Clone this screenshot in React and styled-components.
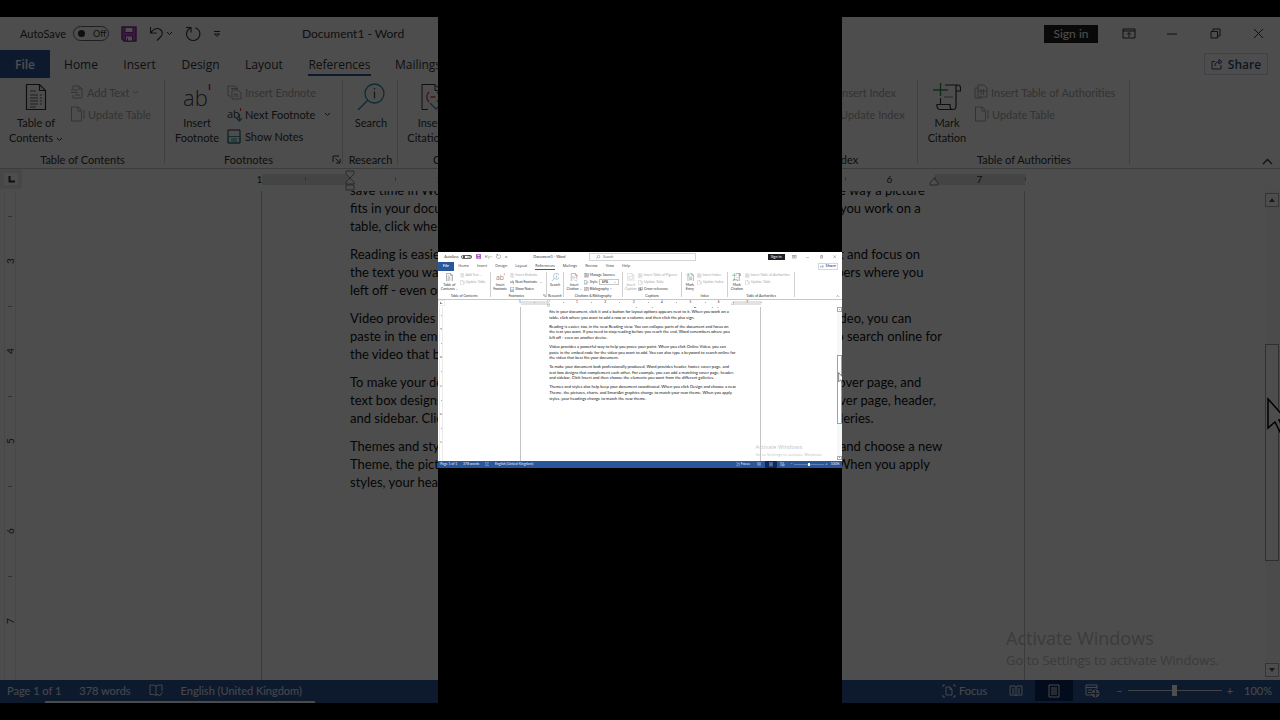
import React from 'react';
import styled, { createGlobalStyle } from 'styled-components';

const GlobalStyle = createGlobalStyle`
  * {
    box-sizing: border-box;
  }

  body {
    margin: 0;
    background: #000;
  }

  button,
  input,
  select {
    margin: 0;
    padding: 0;
    border: 0;
    background: none;
    color: inherit;
    font: inherit;
  }
`;

/* ---------- stage ---------- */

const Stage = styled.main`
  display: grid;
  grid-template-columns: 438fr 404fr 438fr;
  min-height: 100vh;
  overflow: hidden;
  background: #000;
`;

const Backdrop = styled.div`
  grid-area: 1 / 1 / 2 / 4;
  display: flex;
  align-items: center;
  min-width: 0;
  opacity: 0.3;
`;

const Feature = styled.div`
  grid-area: 1 / 2 / 2 / 3;
  display: flex;
  align-items: center;
  min-width: 0;
  background: #000;
  z-index: 1;
`;

const Miniature = styled.div`
  width: 100%;
  zoom: 0.3156;
`;

/* ---------- window ---------- */

const Window = styled.section`
  display: flex;
  flex-direction: column;
  width: 100%;
  min-height: 0;
  aspect-ratio: 1280 / 686;
  overflow: hidden;
  background: #fff;
  color: #333;
  font-family: Lato, 'Open Sans', sans-serif;
  font-size: 11px;
  line-height: 15px;
`;

const TitleBar = styled.header`
  display: grid;
  grid-template-columns: 302px 175px 342px 1fr;
  align-items: center;
  flex: none;
  height: 33px;
`;

const QuickAccess = styled.div`
  display: flex;
  align-items: center;
  gap: 12px;
  padding-left: 20px;
`;

const AutoSave = styled.label`
  display: flex;
  align-items: center;
  gap: 7px;
`;

const Toggle = styled.span`
  display: flex;
  align-items: center;
  gap: 8px;
  width: 36px;
  height: 15px;
  padding-left: 4px;
  border: 1px solid #666;
  border-radius: 8px;
  font-size: 9px;
  line-height: 13px;

  input {
    appearance: none;
    width: 7px;
    height: 7px;
    border-radius: 50%;
    background: #333;
  }
`;

const IconButton = styled.button`
  display: flex;
  align-items: center;
  justify-content: center;
  gap: 2px;
`;

const DocTitle = styled.h1`
  margin: 0;
  font-size: 12px;
  font-weight: 400;
  line-height: 16px;
`;

const SearchBox = styled.label`
  display: flex;
  align-items: center;
  gap: 8px;
  height: 27px;
  padding-left: 22px;
  border: 1px solid #d4d4d4;

  input {
    flex: 1;
    min-width: 0;
    outline: 0;
  }

  input::placeholder {
    color: #666;
    opacity: 1;
  }
`;

const WindowControls = styled.div`
  display: flex;
  align-items: center;
  justify-content: flex-end;
  padding-right: 15px;

  ${IconButton} {
    width: 14px;
    margin-left: 29px;
  }
`;

const SignIn = styled.button`
  width: 54px;
  height: 18px;
  margin-right: -5px;
  background: #1f1f1f;
  color: #fff;
  font-size: 12px;
  line-height: 16px;
`;

const TabBar = styled.nav`
  display: flex;
  flex: none;
  height: 28px;
  padding-right: 12px;
  font-family: 'Open Sans', 'Noto Sans', sans-serif;
  font-size: 12px;
`;

const Tab = styled.button`
  display: flex;
  align-items: center;
  justify-content: center;
  width: ${props => props.$width}px;
  background: ${props => (props.$file ? '#2b579a' : 'none')};
  color: ${props => (props.$file ? '#fff' : '#333')};
  font-weight: ${props => (props.$file ? 600 : 400)};

  span {
    height: 23px;
    padding-top: 4px;
    border-bottom: 2px solid ${props => (props.$active ? '#2b579a' : 'transparent')};
  }
`;

const ShareButton = styled.button`
  display: flex;
  align-items: center;
  justify-content: center;
  align-self: center;
  gap: 5px;
  width: 64px;
  height: 22px;
  margin-left: auto;
  border: 1px solid #d2d6de;
  border-radius: 2px;
  color: #2b4a80;
  font-weight: 600;
`;

/* ---------- ribbon ---------- */

const Ribbon = styled.div`
  display: flex;
  flex: none;
  height: 91px;
  border-bottom: 1px solid #c6c6c6;
`;

const Group = styled.section`
  display: flex;
  flex-direction: column;
  justify-content: space-between;
  flex: none;
  width: ${props => props.$width}px;
  padding-top: 2px;
`;

const GroupBody = styled.div`
  display: flex;
`;

const GroupLabel = styled.footer`
  display: flex;
  align-items: center;
  height: 17px;
  white-space: nowrap;

  span {
    flex: 1;
    text-align: center;
  }

  button {
    margin-right: 2px;
  }
`;

const Divider = styled.hr`
  flex: none;
  width: 1px;
  margin: 2px 0 4px -1px;
  border: 0;
  background: #d0d0d0;
`;

const BigButton = styled.button`
  display: flex;
  flex-direction: column;
  align-items: center;
  gap: 4px;
  flex: none;
  width: ${props => props.$width}px;
  padding: 3px 0 0 2px;
  color: ${props => (props.disabled ? '#a8a8a8' : '#333')};
  white-space: nowrap;
`;

const Commands = styled.div`
  display: flex;
  flex-direction: column;
  align-items: flex-start;
  padding-top: 1px;
`;

const Command = styled.button`
  display: flex;
  align-items: center;
  gap: 3px;
  height: 22px;
  color: ${props => (props.disabled ? '#a8a8a8' : '#333')};
  white-space: nowrap;
`;

const StyleField = styled.label`
  display: flex;
  align-items: center;
  gap: 3px;
  height: 22px;
`;

const SelectBox = styled.span`
  display: flex;
  align-items: center;
  width: 62px;
  height: 18px;
  padding: 0 5px;
  border: 1px solid #c8c8c8;

  select {
    appearance: none;
    flex: 1;
    min-width: 0;
  }
`;

const Collapse = styled.button`
  align-self: flex-end;
  height: 16px;
  margin: 0 7px 0 auto;
`;

/* ---------- rulers and page ---------- */

const RulerRow = styled.div`
  display: flex;
  flex: none;
  height: 22px;
`;

const TabSelector = styled.button`
  display: flex;
  align-items: center;
  justify-content: center;
  width: 22px;
  height: 20px;
  border: 4px solid #ececec;
  background: #fff;
`;

const RulerArea = styled.div`
  display: flex;
  flex: 1;
  justify-content: center;
  padding-right: 16px;
`;

const Ruler = styled.div`
  display: grid;
  grid-template-columns: 88px 584px 91px;
  grid-template-rows: 20px;
`;

const RulerMargin = styled.div`
  grid-row: 1;
  grid-column: ${props => props.$column};
  align-self: center;
  height: 11px;
  background: #e2e2e2;
`;

const RulerMarkers = styled.div`
  grid-area: 1 / 2;
  display: flex;
  align-items: flex-end;
  justify-content: space-between;
  height: 22px;
  margin: 0 -5px;
  z-index: 1;
`;

const RulerNumbers = styled.div`
  grid-area: 1 / 1 / 2 / 4;
  display: flex;
  justify-self: end;
  font-size: 10px;
  line-height: 12px;
`;

const Inch = styled.span`
  display: flex;
  align-items: center;
  justify-content: center;
  width: 90px;

  &::after {
    content: '';
    width: 1px;
    height: 4px;
    margin-right: -1px;
    background: #aaa;
  }

  b {
    flex: 1;
    font-weight: 400;
    text-align: center;
  }
`;

const Workspace = styled.div`
  position: relative;
  display: flex;
  flex: 1;
  min-height: 0;
  overflow: hidden;
`;

const SideRuler = styled.div`
  width: 12px;
  margin-left: 4px;
  padding-top: 25px;
  overflow: hidden;
  border: solid #ececec;
  border-width: 0 1px;
  font-size: 10px;
  line-height: 10px;
`;

const SideInch = styled.div`
  display: flex;
  flex-direction: column;
  align-items: center;
  height: 90px;

  &::before {
    content: '';
    width: 4px;
    height: 1px;
    background: #aaa;
  }

  span {
    flex: 1;
    text-align: center;
    writing-mode: vertical-rl;
    transform: rotate(180deg);
  }
`;

const PageArea = styled.div`
  display: flex;
  flex: 1;
  justify-content: center;
  padding-left: 5px;
`;

const Page = styled.article`
  width: 764px;
  padding-left: 88px;
  border: solid #c4c4c4;
  border-width: 0 1px;
  color: #111;
  font-size: 13px;
  line-height: 18px;
  white-space: nowrap;

  p {
    margin: 0 0 10px;
  }

  p:first-child {
    margin-top: -10px;
  }

  span {
    display: block;
  }
`;

const Scrollbar = styled.div`
  position: relative;
  display: flex;
  flex-direction: column;
  width: 15px;
  padding: 2px 1px 3px 0;
  background: #f7f7f7;
`;

const ScrollArrow = styled.button`
  display: flex;
  align-items: center;
  justify-content: center;
  flex: none;
  height: 14px;
  border: 1px solid #ababab;
  background: #fff;
`;

const ScrollTrack = styled.div`
  display: grid;
  flex: 1;
  grid-template-rows: 137fr 218fr 102fr;
`;

const ScrollThumb = styled.div`
  grid-row: 2;
  border: 1px solid #a0a0a0;
  background: #fff;
`;

const Pointer = styled.svg`
  position: absolute;
  top: 206px;
  left: 1px;
`;

const Watermark = styled.aside`
  position: absolute;
  right: 54px;
  bottom: 10px;
  width: 220px;
  color: #c2c2c8;
  font-family: 'Open Sans', 'Noto Sans', sans-serif;
  font-size: 13px;
  line-height: 20px;
  white-space: nowrap;

  strong {
    display: block;
    font-size: 18px;
    font-weight: 400;
    line-height: 24px;
  }
`;

/* ---------- status bar ---------- */

const StatusBar = styled.footer`
  display: flex;
  align-items: center;
  justify-content: space-between;
  flex: none;
  height: 21px;
  padding: 0 8px 0 7px;
  background: #2b579a;
  color: #e8ecf4;
`;

const StatusGroup = styled.div`
  display: flex;
  align-items: center;
  gap: ${props => props.$gap}px;
  height: 100%;
`;

const FocusButton = styled.button`
  display: flex;
  align-items: center;
  gap: 3px;
  margin-right: 10px;
`;

const ViewButton = styled.button`
  display: flex;
  align-items: center;
  justify-content: center;
  width: 38px;
  height: 100%;
  background: ${props => (props.$active ? '#0c2a5e' : 'none')};
`;

const ZoomControl = styled.div`
  display: flex;
  align-items: center;
  gap: 5px;
  margin: 0 11px 0 5px;
`;

const ZoomSlider = styled.input`
  appearance: none;
  width: 94px;
  height: 12px;
  background: linear-gradient(#d5ddeb, #d5ddeb) center / 100% 1px no-repeat;

  &::-webkit-slider-thumb {
    appearance: none;
    width: 5px;
    height: 11px;
    background: #fff;
  }
`;

const ProgressTrack = styled.div`
  flex: none;
  height: 2px;
  padding-left: 45px;
  background: #2b579a;
`;

const Progress = styled.div`
  width: 270px;
  height: 2px;
  background: #f4f4f4;
`;

/* ---------- icons ---------- */

const Svg = ({ size = 14, width = size, height = size, children }) => (
  <svg
    width={width}
    height={height}
    viewBox={`0 0 ${width} ${height}`}
    fill="none"
    stroke="currentColor"
    strokeWidth="1"
    aria-hidden="true"
  >
    {children}
  </svg>
);

const Caret = () => (
  <Svg width={7} height={5}>
    <path d="M1 1l2.500 2.500L6 1" />
  </Svg>
);

const SaveIcon = () => (
  <Svg size={16}>
    <path d="M1 1h14v14H3l-2-2z" fill="#b45ac8" stroke="#8c2fa5" strokeWidth="1.500" />
    <path d="M4 1.500h8v5H4z" fill="#fff" stroke="#8c2fa5" />
    <path d="M4.500 10h7v5h-7z" fill="#fff" stroke="#8c2fa5" />
    <path d="M6.500 12v3" stroke="#8c2fa5" />
  </Svg>
);

const UndoIcon = () => (
  <Svg size={15}>
    <path d="M1.500 1v6h6M1.800 6.700C4 3 8 1.500 11 3.200c3 2 3 5.500.5 7.800L8 14.500" strokeWidth="1.100" />
  </Svg>
);

const RedoIcon = () => (
  <Svg size={16}>
    <path d="M1 1.500h5v5M5.500 2C2 4 .8 7.500 2.200 10.800c2.500 5 9.500 5 12 0 1.600-4-.2-7.300-3.700-9" strokeWidth="1.100" />
  </Svg>
);

const CustomizeIcon = () => (
  <Svg width={8} height={8}>
    <path d="M1 1.500h6M1.500 4L4 6.500 6.500 4z" />
  </Svg>
);

const TocIcon = () => (
  <Svg width={22} height={28}>
    <path d="M1.500 1.500h13l6 6v19h-19zM14.500 1.500v6h6" strokeWidth="1.200" />
    <path d="M5 8h6M5 12h8M15 12h2M5 15h8M15 15h2M5 18h8M15 18h2M5 21h8M15 21h2M5 24h6" stroke="#666" />
  </Svg>
);

const AddTextIcon = () => (
  <Svg size={14}>
    <path d="M3 4V1h6l3 3v9H3v-3M9 1v3h3M1 5h7M1 7.500h7M5 10h5" />
  </Svg>
);

const UpdateIcon = () => (
  <Svg width={15} height={16}>
    <path d="M1.500 1h7l3 3.500V15h-10zM8 1v4h3.500M14 4v9" />
  </Svg>
);

const FootnoteIcon = () => (
  <Svg width={28} height={28}>
    <text x="0" y="23" fontSize="22" fill="#444" stroke="none" fontFamily="Open Sans" fontWeight="300">
      ab
    </text>
    <path d="M26.500 1v6" stroke="#c0392b" strokeWidth="1.500" />
  </Svg>
);

const EndnoteIcon = () => (
  <Svg size={15}>
    <path d="M4 11H1V1h7l3 3M4 3.500h6v2M5 14V5h6l3 3v6zM8 8v4M8 9.500h2.500V12" />
  </Svg>
);

const NextNoteIcon = () => (
  <Svg size={15}>
    <text x="0" y="11" fontSize="11" fill="#444" stroke="none" fontFamily="Open Sans">
      ab
    </text>
    <path d="M13.500 1v3" stroke="#c0392b" />
    <path d="M12.500 7v7M9.500 11l3 3 2.500-3" stroke="#2e8b9a" strokeWidth="1.200" />
  </Svg>
);

const ShowNotesIcon = () => (
  <Svg width={15} height={15}>
    <path d="M1 1h12v13H1z" />
    <path d="M1 7.500h12V14H1zM4 10h6M4 12h6" stroke="#2e9aa5" />
  </Svg>
);

const LauncherIcon = () => (
  <Svg size={9}>
    <path d="M1 7V1h6M3.500 3.500L8 8M8 4v4H4" />
  </Svg>
);

const ResearchIcon = () => (
  <Svg size={28}>
    <circle cx="17.500" cy="10.500" r="9.500" stroke="#2e8fb0" strokeWidth="1.300" />
    <path d="M10.500 17.500L1 27" stroke="#2e8fb0" strokeWidth="1.500" />
    <path d="M17.500 8.500v7M17.500 5v1.500" stroke="#555" strokeWidth="1.300" />
  </Svg>
);

const CitationIcon = () => (
  <Svg size={28}>
    <path d="M4 1.500h13l6 6V12M17 1.500v6h6M4 1.500v25h6" />
    <path d="M11 9c-3 3-3 7 0 10M19 9c3 3 3 7 0 10M12.500 14h5" stroke="#d0453a" strokeWidth="1.300" />
    <path d="M12 20l6 6 6-6" stroke="#2e9aa5" strokeWidth="1.300" />
  </Svg>
);

const SourcesIcon = () => (
  <Svg width={15} height={14}>
    <path d="M1 1h13v12H1zM5 1v12M9 1v12" />
    <path d="M11 4v6M7 4v6" stroke="#2b73b8" />
  </Svg>
);

const StyleIcon = () => (
  <Svg width={15} height={14}>
    <path d="M1 1h6l2 3v9H1z" />
    <path d="M5 11l7-7 2 2-7 7z" stroke="#2b73b8" fill="#fff" />
  </Svg>
);

const BibliographyIcon = () => (
  <Svg width={15} height={14}>
    <path d="M1 1h13v12H1zM7.500 1v12M9.500 4h3M9.500 7h3M3 4h2.500M3 7h2.500M3 10h2.500" />
  </Svg>
);

const CaptionIcon = () => (
  <Svg width={24} height={28}>
    <path d="M2 1.500h14l6 6v19H2zM16 1.500v6h6" />
    <path d="M6 11h12v8H6zM6 22.500h12" />
  </Svg>
);

const TableIcon = () => (
  <Svg width={14} height={16}>
    <path d="M4 4H1v10h7M4 1h6l3 3v9H4zM7 5v6M9.500 5v6M4 7h9" />
  </Svg>
);

const CrossIcon = () => (
  <Svg width={15} height={14}>
    <path d="M1 3h6v9H1zM7 1h7v9H7zM3 7h8M9 5l2 2-2 2" />
  </Svg>
);

const MarkEntryIcon = () => (
  <Svg width={26} height={28}>
    <path d="M6 10v16.500h18V7l-6-5.500h-6M18 1.500V7h6M10 13h10M10 17h10M10 21h10" />
    <path d="M7 0v12M1 6h12" stroke="#2f9a57" strokeWidth="1.300" />
  </Svg>
);

const MarkCitationIcon = () => (
  <Svg width={28} height={28}>
    <path d="M12 2h13c2 0 2.500 1.500 2.500 3v3H23M23 8V4c0-1.500 1-2 2-2M23 8v15c0 2-1 3.500-3 3.500H7c-2 0-3-1.500-3-3.500v-1.500h13V23c0 2 1 3.500 3 3.500M7.500 15v6.500" strokeWidth="1.200" />
    <path d="M11 14h9" stroke="#b07070" />
    <path d="M7.500 0v13M0 7h15" stroke="#2f9a57" strokeWidth="1.400" />
  </Svg>
);

const DisplayOptionsIcon = () => (
  <Svg width={14} height={11}>
    <path d="M1 1h12v9H1zM1 3h12M7 9V5M5 6.500L7 4.500l2 2" />
  </Svg>
);

const RestoreIcon = () => (
  <Svg size={11}>
    <path d="M1 3.500h6.500V10H1zM3 3V1h7v7H8" />
  </Svg>
);

const CloseIcon = () => (
  <Svg size={11}>
    <path d="M1 1l9 9M10 1l-9 9" />
  </Svg>
);

const ShareIcon = () => (
  <Svg size={12}>
    <path d="M4 3.500H1V11h9V7M4 8c0-3 1.500-4 4-4M8 1.500V6l3-2.300z" />
  </Svg>
);

const ProofIcon = () => (
  <Svg width={14} height={13}>
    <path d="M7 2v9M7 2C5.500 1 3 1 1 1v9.500h3.500c1 0 2 .5 2.500 1 .5-.5 1-1 2-1M7 2c1.500-1 4-1 6-1v6M9 10l1.500 2L13.500 8" />
  </Svg>
);

const FocusIcon = () => (
  <Svg size={14}>
    <path d="M1 3V1h2M11 1h2v2M1 11v2h2M11 13h2v-2M4 3h4l2 2.500V11H4zM8 3v2.500h2" />
  </Svg>
);

const ReadIcon = () => (
  <Svg width={14} height={12}>
    <path d="M7 2v9M1 1h5l1 1 1-1h5v9H8l-1 1-1-1H1zM3 4h2.500M3 6h2.500M3 8h2.500M8.500 4H11M8.500 6H11M8.500 8H11" />
  </Svg>
);

const PrintIcon = () => (
  <Svg width={12} height={14}>
    <path d="M1 1h10v12H1zM3 4h6M3 6h6M3 8h6M3 10h6" />
  </Svg>
);

const WebIcon = () => (
  <Svg width={15} height={14}>
    <path d="M7 11H1V1h11v4M1 3.500h11M3 6h4M3 8.500h3" />
    <circle cx="10.500" cy="9.500" r="3.500" fill="#aebdd6" />
    <path d="M10.500 6v7M7 9.500h7" stroke="#2b579a" />
  </Svg>
);

/* ---------- content ---------- */

const tabs = [
  ['File', 50],
  ['Home', 62],
  ['Insert', 55],
  ['Design', 67],
  ['Layout', 60],
  ['References', 91],
  ['Mailings', 66],
  ['Review', 70],
  ['View', 48],
  ['Help', 54],
];

const paragraphs = [
  [
    'save time in Word with new buttons that show up where you need them. To change the way a picture',
    'fits in your document, click it and a button for layout options appears next to it. When you work on a',
    'table, click where you want to add a row or a column, and then click the plus sign.',
  ],
  [
    'Reading is easier, too, in the new Reading view. You can collapse parts of the document and focus on',
    'the text you want. If you need to stop reading before you reach the end, Word remembers where you',
    'left off - even on another device.',
  ],
  [
    'Video provides a powerful way to help you prove your point. When you click Online Video, you can',
    'paste in the embed code for the video you want to add. You can also type a keyword to search online for',
    'the video that best fits your document.',
  ],
  [
    'To make your document look professionally produced, Word provides header, footer, cover page, and',
    'text box designs that complement each other. For example, you can add a matching cover page, header,',
    'and sidebar. Click Insert and then choose the elements you want from the different galleries.',
  ],
  [
    'Themes and styles also help keep your document coordinated. When you click Design and choose a new',
    'Theme, the pictures, charts, and SmartArt graphics change to match your new theme. When you apply',
    'styles, your headings change to match the new theme.',
  ],
];

const RibbonGroup = ({ label, width, launcher, children }) => (
  <>
    <Group $width={width}>
      <GroupBody>{children}</GroupBody>
      <GroupLabel>
        <span>{label}</span>
        {launcher && (
          <button type="button" aria-label={`${label} settings`}>
            <LauncherIcon />
          </button>
        )}
      </GroupLabel>
    </Group>
    <Divider />
  </>
);

const Big = ({ icon, top, bottom, width, menu, disabled }) => (
  <BigButton type="button" $width={width} disabled={disabled}>
    {icon}
    <span>
      {top}
      <br />
      {bottom} {menu && <Caret />}
    </span>
  </BigButton>
);

const WordWindow = () => (
  <Window>
    <TitleBar>
      <QuickAccess>
        <AutoSave>
          AutoSave
          <Toggle>
            <input type="checkbox" />
            Off
          </Toggle>
        </AutoSave>
        <IconButton type="button" aria-label="Save">
          <SaveIcon />
        </IconButton>
        <IconButton type="button" aria-label="Undo">
          <UndoIcon />
          <Caret />
        </IconButton>
        <IconButton type="button" aria-label="Repeat">
          <RedoIcon />
        </IconButton>
        <IconButton type="button" aria-label="Customize toolbar">
          <CustomizeIcon />
        </IconButton>
      </QuickAccess>
      <DocTitle>Document1 - Word</DocTitle>
      <SearchBox>
        <Svg size={13}>
          <circle cx="8" cy="5" r="4" />
          <path d="M5 8l-4 4" />
        </Svg>
        <input type="text" placeholder="Search" aria-label="Search" />
      </SearchBox>
      <WindowControls>
        <SignIn type="button">Sign in</SignIn>
        <IconButton type="button" aria-label="Ribbon display options">
          <DisplayOptionsIcon />
        </IconButton>
        <IconButton type="button" aria-label="Minimize">
          <Svg width={10} height={2}>
            <path d="M0 1h10" />
          </Svg>
        </IconButton>
        <IconButton type="button" aria-label="Restore">
          <RestoreIcon />
        </IconButton>
        <IconButton type="button" aria-label="Close">
          <CloseIcon />
        </IconButton>
      </WindowControls>
    </TitleBar>

    <TabBar>
      {tabs.map(([name, width]) => (
        <Tab
          key={name}
          type="button"
          $width={width}
          $file={name === 'File'}
          $active={name === 'References'}
        >
          <span>{name}</span>
        </Tab>
      ))}
      <ShareButton type="button">
        <ShareIcon />
        Share
      </ShareButton>
    </TabBar>

    <Ribbon>
      <RibbonGroup label="Table of Contents" width={165}>
        <Big icon={<TocIcon />} top="Table of" bottom="Contents" width={70} menu />
        <Commands>
          <Command type="button" disabled>
            <AddTextIcon />
            Add Text <Caret />
          </Command>
          <Command type="button" disabled>
            <UpdateIcon />
            Update Table
          </Command>
        </Commands>
      </RibbonGroup>
      <RibbonGroup label="Footnotes" width={178} launcher>
        <Big icon={<FootnoteIcon />} top="Insert" bottom="Footnote" width={62} />
        <Commands>
          <Command type="button" disabled>
            <EndnoteIcon />
            Insert Endnote
          </Command>
          <Command type="button">
            <NextNoteIcon />
            Next Footnote &nbsp; <Caret />
          </Command>
          <Command type="button">
            <ShowNotesIcon />
            Show Notes
          </Command>
        </Commands>
      </RibbonGroup>
      <RibbonGroup label="Research" width={55}>
        <Big icon={<ResearchIcon />} top="Search" width={54} />
      </RibbonGroup>
      <RibbonGroup label="Citations & Bibliography" width={187}>
        <Big icon={<CitationIcon />} top="Insert" bottom="Citation" width={65} menu />
        <Commands>
          <Command type="button">
            <SourcesIcon />
            Manage Sources
          </Command>
          <StyleField>
            <StyleIcon />
            Style:
            <SelectBox>
              <select defaultValue="APA">
                <option>APA</option>
                <option>MLA</option>
              </select>
              <Caret />
            </SelectBox>
          </StyleField>
          <Command type="button">
            <BibliographyIcon />
            Bibliography <Caret />
          </Command>
        </Commands>
      </RibbonGroup>
      <RibbonGroup label="Captions" width={187}>
        <Big icon={<CaptionIcon />} top="Insert" bottom="Caption" width={50} disabled />
        <Commands>
          <Command type="button" disabled>
            <TableIcon />
            Insert Table of Figures
          </Command>
          <Command type="button" disabled>
            <UpdateIcon />
            Update Table
          </Command>
          <Command type="button">
            <CrossIcon />
            Cross-reference
          </Command>
        </Commands>
      </RibbonGroup>
      <RibbonGroup label="Index" width={146}>
        <Big icon={<MarkEntryIcon />} top="Mark" bottom="Entry" width={50} />
        <Commands>
          <Command type="button" disabled>
            <TableIcon />
            Insert Index
          </Command>
          <Command type="button" disabled>
            <UpdateIcon />
            Update Index
          </Command>
        </Commands>
      </RibbonGroup>
      <RibbonGroup label="Table of Authorities" width={212}>
        <Big icon={<MarkCitationIcon />} top="Mark" bottom="Citation" width={56} />
        <Commands>
          <Command type="button" disabled>
            <TableIcon />
            Insert Table of Authorities
          </Command>
          <Command type="button" disabled>
            <UpdateIcon />
            Update Table
          </Command>
        </Commands>
      </RibbonGroup>
      <Collapse type="button" aria-label="Collapse the ribbon">
        <Svg width={11} height={7}>
          <path d="M1 6l4.500-4.500L10 6" strokeWidth="1.300" />
        </Svg>
      </Collapse>
    </Ribbon>

    <RulerRow>
      <TabSelector type="button" aria-label="Tab type">
        <Svg size={7}>
          <path d="M1.500 0v5.500H7" strokeWidth="2" />
        </Svg>
      </TabSelector>
      <RulerArea>
        <Ruler>
          <RulerMargin $column={1} />
          <RulerMargin $column={3} />
          <RulerNumbers>
            {['1', '', '1', '2', '3', '4', '5', '6', '7'].map((n, i) => (
              <Inch key={i}>
                <b>{n}</b>
              </Inch>
            ))}
          </RulerNumbers>
          <RulerMarkers>
            <Svg width={10} height={21}>
              <path d="M1 1h8v3L5 8 1 4zM5 8l4 4v2H1v-2zM1 15h8v5H1z" fill="#fff" stroke="#888" />
            </Svg>
            <Svg width={10} height={14}>
              <path d="M5 1l4 5v2H1V6z" fill="#fff" stroke="#888" />
            </Svg>
          </RulerMarkers>
        </Ruler>
      </RulerArea>
    </RulerRow>

    <Workspace>
      <SideRuler>
        {[3, 4, 5, 6, 7].map(n => (
          <SideInch key={n}>
            <span>{n}</span>
          </SideInch>
        ))}
      </SideRuler>
      <PageArea>
        <Page>
          {paragraphs.map(lines => (
            <p key={lines[0]}>
              {lines.map(line => (
                <span key={line}>{line}</span>
              ))}
            </p>
          ))}
        </Page>
      </PageArea>
      <Watermark>
        <strong>Activate Windows</strong>
        Go to Settings to activate Windows.
      </Watermark>
      <Scrollbar>
        <ScrollArrow type="button" aria-label="Scroll up">
          <Svg width={6} height={4}>
            <path d="M0 4l3-4 3 4z" fill="#555" stroke="none" />
          </Svg>
        </ScrollArrow>
        <ScrollTrack>
          <ScrollThumb />
        </ScrollTrack>
        <ScrollArrow type="button" aria-label="Scroll down">
          <Svg width={6} height={4}>
            <path d="M0 0h6L3 4z" fill="#555" stroke="none" />
          </Svg>
        </ScrollArrow>
        <Pointer width="22" height="36" viewBox="0 0 22 36" aria-hidden="true">
          <path
            d="M2 2v29l7-6 5 10 4-2-5-10h8z"
            fill="#fff"
            stroke="#000"
            strokeWidth="1.500"
          />
        </Pointer>
      </Scrollbar>
    </Workspace>

    <StatusBar>
      <StatusGroup $gap={18}>
        <span>Page 1 of 1</span>
        <span>378 words</span>
        <ProofIcon />
        <span>English (United Kingdom)</span>
      </StatusGroup>
      <StatusGroup $gap={0}>
        <FocusButton type="button">
          <FocusIcon />
          Focus
        </FocusButton>
        <ViewButton type="button" aria-label="Read mode">
          <ReadIcon />
        </ViewButton>
        <ViewButton type="button" aria-label="Print layout" $active>
          <PrintIcon />
        </ViewButton>
        <ViewButton type="button" aria-label="Web layout">
          <WebIcon />
        </ViewButton>
        <ZoomControl>
          <button type="button" aria-label="Zoom out">
            −
          </button>
          <ZoomSlider type="range" min="10" max="190" defaultValue="100" aria-label="Zoom" />
          <button type="button" aria-label="Zoom in">
            +
          </button>
        </ZoomControl>
        <span>100%</span>
      </StatusGroup>
    </StatusBar>
    <ProgressTrack>
      <Progress />
    </ProgressTrack>
  </Window>
);

const App = () => (
  <>
    <GlobalStyle />
    <Stage>
      <Backdrop>
        <WordWindow />
      </Backdrop>
      <Feature>
        <Miniature>
          <WordWindow />
        </Miniature>
      </Feature>
    </Stage>
  </>
);

export default App;
